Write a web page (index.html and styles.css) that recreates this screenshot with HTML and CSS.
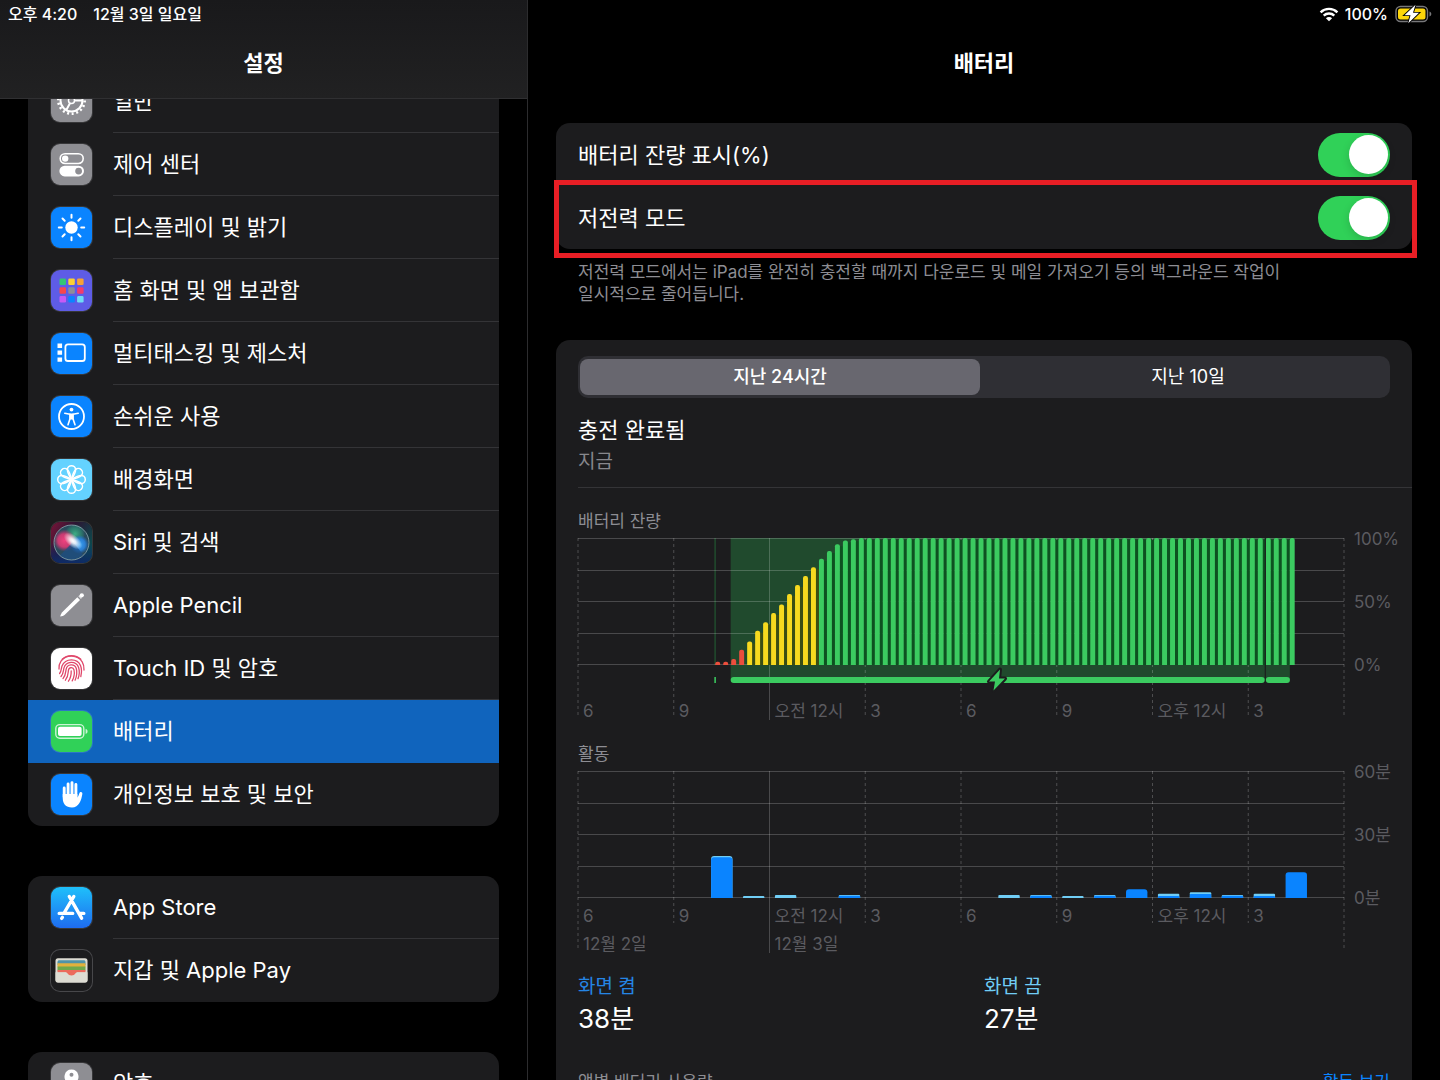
FILE: index.html
```html
<!DOCTYPE html>
<html lang="ko">
<head>
<meta charset="utf-8">
<meta name="viewport" content="width=device-width, initial-scale=1">
<title>설정 – 배터리</title>
<link rel="stylesheet" href="styles.css">
</head>
<body>
<div class="app">
  <aside class="sidebar">
    <header class="bar bar-sidebar">
      <div class="status"><span>오후 4:20</span><span>12월 3일 일요일</span></div>
      <h1 class="bar-title">설정</h1>
    </header>
    <nav class="menu" aria-label="설정">
      <ul class="group group-scrolled">
        <li><a class="item" href="#general">
          <svg class="icon gray" viewBox="0 0 41 41"><g fill="none" stroke="#fff"><circle cx="20.500" cy="19.500" r="11" stroke-width="2"/><circle cx="20.500" cy="19.500" r="13.200" stroke-width="2.600" stroke-dasharray="2 2.607"/><circle cx="20.500" cy="19.500" r="3" stroke-width="1.500"/><path d="M23.500 19.500H31M19 22.200 15.300 29M19 16.800 15.300 10" stroke-width="2"/></g></svg>
          <span class="label">일반</span></a></li>
        <li><a class="item" href="#control">
          <svg class="icon gray" viewBox="0 0 41 41"><rect x="9.200" y="9.700" width="23" height="9.800" rx="4.900" fill="none" stroke="#fff" stroke-width="1.600"/><circle cx="14.200" cy="14.600" r="3.200" fill="#fff"/><rect x="8.400" y="21.800" width="24.600" height="10.600" rx="5.300" fill="#fff"/><circle cx="27.600" cy="27.100" r="3.400" fill="#8e8e93"/></svg>
          <span class="label">제어 센터</span></a></li>
        <li><a class="item" href="#display">
          <svg class="icon blue" viewBox="0 0 41 41"><circle cx="20.500" cy="20.500" r="6.200" fill="#fff"/><path d="M20.500 7.800v3M20.500 30.200v3M7.800 20.500h3M30.200 20.500h3M11.500 11.500l2.200 2.200M27.300 27.300l2.200 2.200M11.500 29.500l2.200-2.200M27.300 13.700l2.200-2.200" stroke="#fff" stroke-width="2" stroke-linecap="round"/></svg>
          <span class="label">디스플레이 및 밝기</span></a></li>
        <li><a class="item" href="#home">
          <svg class="icon purple" viewBox="0 0 41 41"><rect x="8.500" y="8.500" width="6.500" height="6.500" rx="1.300" fill="#34c575"/><rect x="17.300" y="8.500" width="6.500" height="6.500" rx="1.300" fill="#fcd033"/><rect x="26.100" y="8.500" width="6.500" height="6.500" rx="1.300" fill="#f7a135"/><rect x="8.500" y="17.300" width="6.500" height="6.500" rx="1.300" fill="#f8474c"/><rect x="17.300" y="17.300" width="6.500" height="6.500" rx="1.300" fill="#8e8e98"/><rect x="26.100" y="17.300" width="6.500" height="6.500" rx="1.300" fill="#f43b6c"/><rect x="8.500" y="26.100" width="6.500" height="6.500" rx="1.300" fill="#c65af5"/><rect x="17.300" y="26.100" width="6.500" height="6.500" rx="1.300" fill="#0a84ff"/><rect x="26.100" y="26.100" width="6.500" height="6.500" rx="1.300" fill="#6fdcf5"/></svg>
          <span class="label">홈 화면 및 앱 보관함</span></a></li>
        <li><a class="item" href="#multitasking">
          <svg class="icon blue" viewBox="0 0 41 41"><path d="M6.500 10.500h4.600v4.400H6.500zM6.500 17.400h4.600v4.400H6.500zM6.500 24.400h4.600v4.400H6.500z" fill="#fff"/><rect x="14.400" y="11.400" width="19.400" height="16.600" rx="2.600" fill="none" stroke="#fff" stroke-width="1.800"/></svg>
          <span class="label">멀티태스킹 및 제스처</span></a></li>
        <li><a class="item" href="#accessibility">
          <svg class="icon blue" viewBox="0 0 41 41"><circle cx="20.500" cy="20.500" r="12.500" fill="none" stroke="#fff" stroke-width="1.800"/><circle cx="20.500" cy="13.600" r="1.900" fill="#fff"/><path d="M13.800 17.200l5.200 1v4.500l-2 6M27.200 17.200l-5.200 1v4.500l2 6" fill="none" stroke="#fff" stroke-width="1.600" stroke-linecap="round" stroke-linejoin="round"/><path d="M18.400 17.500h4.200v6h-4.200z" fill="#fff"/></svg>
          <span class="label">손쉬운 사용</span></a></li>
        <li><a class="item" href="#wallpaper">
          <svg class="icon sky" viewBox="0 0 41 41"><g fill="none" stroke="#fff" stroke-width="1.500"><path id="petal" d="M20.500 20.500C18 16.500 16.400 13.500 16.400 10.800a4.100 4.100 0 0 1 8.200 0C24.600 13.500 23 16.500 20.500 20.500z"/><use href="#petal" transform="rotate(45 20.500 20.500)"/><use href="#petal" transform="rotate(90 20.500 20.500)"/><use href="#petal" transform="rotate(135 20.500 20.500)"/><use href="#petal" transform="rotate(180 20.500 20.500)"/><use href="#petal" transform="rotate(225 20.500 20.500)"/><use href="#petal" transform="rotate(270 20.500 20.500)"/><use href="#petal" transform="rotate(315 20.500 20.500)"/></g></svg>
          <span class="label">배경화면</span></a></li>
        <li><a class="item" href="#siri">
          <svg class="icon siri" viewBox="0 0 41 41"><defs>
            <linearGradient id="sbg" x1="0" y1="0" x2="1" y2=".6"><stop offset="0" stop-color="#7b1438"/><stop offset=".45" stop-color="#2c1533"/><stop offset="1" stop-color="#0a4d4e"/></linearGradient>
            <linearGradient id="sbl" x1="0" y1="0" x2="0" y2="1"><stop offset=".5" stop-color="#0f2b6d" stop-opacity="0"/><stop offset="1" stop-color="#0e2a66"/></linearGradient>
            <radialGradient id="sp"><stop offset="0" stop-color="#f0417e"/><stop offset=".6" stop-color="#d93a74" stop-opacity=".9"/><stop offset="1" stop-color="#c0316e" stop-opacity="0"/></radialGradient>
            <radialGradient id="sg"><stop offset="0" stop-color="#3fae86"/><stop offset=".6" stop-color="#2f8f74" stop-opacity=".7"/><stop offset="1" stop-color="#2aa27a" stop-opacity="0"/></radialGradient>
            <radialGradient id="sb"><stop offset="0" stop-color="#3ba6f7"/><stop offset=".6" stop-color="#2b83dd" stop-opacity=".9"/><stop offset="1" stop-color="#1d6fd0" stop-opacity="0"/></radialGradient>
            <radialGradient id="sw"><stop offset="0" stop-color="#fff"/><stop offset=".3" stop-color="#fff" stop-opacity=".85"/><stop offset="1" stop-color="#fff" stop-opacity="0"/></radialGradient></defs>
            <rect width="41" height="41" fill="url(#sbg)"/><rect width="41" height="41" fill="url(#sbl)"/>
            <circle cx="20.500" cy="20.500" r="17.500" fill="#2a4a5c"/><circle cx="24" cy="12" r="10" fill="url(#sg)"/><circle cx="13.500" cy="18.500" r="11" fill="url(#sp)"/><circle cx="28.500" cy="22.500" r="9.500" fill="url(#sb)"/><path d="M22 20 9 33.500c6 5.500 17 5.500 23-1z" fill="#1d4f86" opacity=".7"/><ellipse cx="22" cy="19" rx="11" ry="6" transform="rotate(40 22 19)" fill="url(#sw)"/><circle cx="20.500" cy="20.500" r="17.500" fill="none" stroke="#8fa9b2" stroke-opacity=".8"/></svg>
          <span class="label">Siri 및 검색</span></a></li>
        <li><a class="item" href="#pencil">
          <svg class="icon gray" viewBox="0 0 41 41"><path d="M9.200 31.500c.4-1.700 1-3.200 2-4.300L26.300 12.200l2.700 2.700L13.800 29.800c-1.200 1-2.700 1.500-4.600 1.700z" fill="#fff"/><path d="M27.300 11.300l1.100-1 2.600 2.500-1.100 1.100z" fill="#fff" opacity=".75"/><circle cx="30.800" cy="10.300" r="2.100" fill="#fff"/></svg>
          <span class="label">Apple Pencil</span></a></li>
        <li><a class="item" href="#touchid">
          <svg class="icon white" viewBox="0 0 41 41"><g fill="none" stroke="#e0486b" stroke-width="1.300" stroke-linecap="round"><path d="M11.200 11.200C16 6.300 25 6.300 29.800 11.200"/><path d="M8 21c-.2-3 .5-5.600 2-7.800 5-7 16.600-6.600 21.200.6 1.400 2.300 2 5 1.800 8.200"/><path d="M8.600 25.500c2-2.600 1.500-5 2.400-7.500 3.500-8.300 15.500-8 18.600-.2 1.200 3.200 1 7.200.2 10.700"/><path d="M10 28.500c2.600-3 2.300-6 2.900-8.400 2-7.400 12.300-7.600 14.700-.6 1.100 3.400.6 8-.6 11.200"/><path d="M12 30.600c2.800-3.200 2.600-6.700 3.100-9.300 1-5.700 8.600-6 10.200-.8.900 3.500.3 8.200-1.200 11.700"/><path d="M14.400 32.200c2.900-3.500 2.700-6.900 3-9.700.4-3.600 4.700-4 5.600-.6.800 3.700 0 7.700-1.800 11"/><path d="M17.400 33.200c2.400-3.300 2.900-6.400 2.800-10.300"/></g></svg>
          <span class="label">Touch ID 및 암호</span></a></li>
        <li><a class="item selected" href="#battery" aria-current="page">
          <svg class="icon green" viewBox="0 0 41 41"><rect x="4.800" y="13.600" width="28" height="13.600" rx="4" fill="none" stroke="#fff" stroke-opacity=".75" stroke-width="1.400"/><rect x="7" y="15.800" width="23.600" height="9.200" rx="2" fill="#fff"/><path d="M34.600 17.800c2.600.8 2.600 4.400 0 5.200z" fill="#fff" opacity=".75"/></svg>
          <span class="label">배터리</span></a></li>
        <li><a class="item" href="#privacy">
          <svg class="icon blue" viewBox="0 0 41 41"><path d="M13.200 14v9M17.100 10v12M21 8.600v13M24.900 10.500v12" stroke="#fff" stroke-width="2.900" stroke-linecap="round"/><path d="M11.750 20h14.600v3.600c.8-.9 1.500-2.400 2-4.300.6-2 3.400-1.600 3 .7-1 6-3.300 13.500-10.400 13.500-6.200 0-9.200-4-9.200-9z" fill="#fff"/></svg>
          <span class="label">개인정보 보호 및 보안</span></a></li>
      </ul>
      <ul class="group">
        <li><a class="item" href="#appstore">
          <svg class="icon store" viewBox="0 0 41 41"><g stroke="#fff" stroke-width="3.400" stroke-linecap="round"><path d="M22.800 9.500 13.400 25.500M18.300 9.500 30.600 31.200M8.200 26.400h13.500M28.500 26.400h4.300M11.400 30.400l-.7 1"/></g></svg>
          <span class="label">App Store</span></a></li>
        <li><a class="item" href="#wallet">
          <svg class="icon wallet" viewBox="0 0 41 41"><rect x="4.500" y="8.200" width="32" height="24.300" rx="2.500" fill="#dddcd3"/><path d="M6.500 12.300c0-1.500.7-2 2-2h24c1.300 0 2 .5 2 2v3h-28z" fill="#4f93a8"/><path d="M6.500 13.300h28v4h-28z" fill="#e2b13c"/><path d="M6.500 16.600h28v4h-28z" fill="#70a84b"/><path d="M6.500 20h28v2.500h-28z" fill="#ec6a5c"/><path d="M4.500 22.200h10.300c1.500 0 1.800 3.600 5.700 3.600s4.200-3.600 5.700-3.600h10.300v8a2.300 2.300 0 0 1-2.300 2.300H6.800a2.300 2.300 0 0 1-2.300-2.300z" fill="#dddcd3"/><path d="M14.500 21.500h12c-1.500 0-2.100 4-6 4s-4.500-4-6-4z" fill="#ec6a5c"/></svg>
          <span class="label">지갑 및 Apple Pay</span></a></li>
      </ul>
      <ul class="group">
        <li><a class="item" href="#passwords">
          <svg class="icon gray" viewBox="0 0 41 41"><path fill-rule="evenodd" d="M20.500 6.500a7 7 0 0 1 3 13.300V32l-3 3-3-3V19.800a7 7 0 0 1 3-13.300zm0 3.200a2 2 0 1 0 0 4 2 2 0 0 0 0-4z" fill="#fff"/></svg>
          <span class="label">암호</span></a></li>
      </ul>
    </nav>
  </aside>

  <main class="detail">
    <header class="bar">
      <div class="status status-right">
        <svg class="wifi" viewBox="0 0 20 15" aria-hidden="true"><path d="M1.600 5.300a12 12 0 0 1 16.800 0M4.700 8.600a7.600 7.600 0 0 1 10.600 0" fill="none" stroke="#fff" stroke-width="2.400"/><path d="M10 14.300 6.900 11.200a4.400 4.400 0 0 1 6.200 0z" fill="#fff"/></svg>
        <span>100%</span>
        <svg class="battery" viewBox="0 0 38 20" aria-hidden="true"><rect x="2" y="2.500" width="31.500" height="15" rx="4.500" fill="none" stroke="#77777a" stroke-width="1.400"/><rect x="4" y="4.500" width="27.500" height="11" rx="2.500" fill="#fdd60a"/><path d="M35.500 7.500c2.400.8 2.400 4.200 0 5z" fill="#77777a"/><path d="M21.500.8 10.500 11.200h6L14.300 19.200 25 8.800h-6z" fill="#fff" stroke="#000" stroke-width="1.800" paint-order="stroke"/></svg>
      </div>
      <h2 class="bar-title">배터리</h2>
    </header>

    <div class="content">
      <section class="card">
        <label class="option"><span>배터리 잔량 표시(%)</span><input class="switch" type="checkbox" role="switch" checked></label>
        <label class="option highlighted"><span>저전력 모드</span><input class="switch" type="checkbox" role="switch" checked></label>
      </section>
      <p class="note">저전력 모드에서는 iPad를 완전히 충전할 때까지 다운로드 및 메일 가져오기 등의 백그라운드 작업이 일시적으로 줄어듭니다.</p>

      <section class="card usage">
        <div class="segments">
          <button class="segment active" type="button" aria-pressed="true">지난 24시간</button>
          <button class="segment" type="button" aria-pressed="false">지난 10일</button>
        </div>
        <div class="charge">
          <p class="charge-state">충전 완료됨</p>
          <p class="charge-time">지금</p>
        </div>

        <h3 class="chart-title">배터리 잔량</h3>
        <div class="chart">
          <div class="plot">
            <svg class="canvas" id="level" role="img" aria-label="배터리 잔량"></svg>
            <div class="hours"><span>6</span><span>9</span><span>오전 12시</span><span>3</span><span>6</span><span>9</span><span>오후 12시</span><span>3</span></div>
          </div>
          <div class="scale"><span>100%</span><span>50%</span><span>0%</span></div>
        </div>

        <h3 class="chart-title">활동</h3>
        <div class="chart">
          <div class="plot">
            <svg class="canvas" id="activity" role="img" aria-label="활동"></svg>
            <div class="hours hours-dated"><span>6<br>12월 2일</span><span>9</span><span>오전 12시<br>12월 3일</span><span>3</span><span>6</span><span>9</span><span>오후 12시</span><span>3</span></div>
          </div>
          <div class="scale"><span>60분</span><span>30분</span><span>0분</span></div>
        </div>

        <dl class="totals">
          <div><dt class="on">화면 켬</dt><dd>38분</dd></div>
          <div><dt class="off">화면 끔</dt><dd>27분</dd></div>
        </dl>
        <div class="apps"><span>앱별 배터리 사용량</span><a href="#activity">활동 보기</a></div>
      </section>
    </div>
  </main>
</div>
<script src="charts.js"></script>
</body>
</html>
```
FILE: styles.css
```css
* { box-sizing: border-box; }

body {
  margin: 0;
  background: #000;
  color: #fff;
  font-family: Inter, "Noto Sans CJK KR", sans-serif;
  font-size: 22px;
  line-height: 32px;
}

h1, h2, h3, p, ul, dl, dd { margin: 0; padding: 0; }
ul { list-style: none; }
a { color: inherit; text-decoration: none; }

.app {
  display: grid;
  grid-template-columns: 11fr 19fr;
  height: 100vh;
}

.sidebar, .detail {
  display: flex;
  flex-direction: column;
  min-width: 0;
  min-height: 0;
}
.sidebar { border-right: 1px solid #2c2c2e; }

/* Top bars */
.bar { flex: none; height: 99px; }
.bar-sidebar {
  background: linear-gradient(#19191b, #212122);
  border-bottom: 1px solid #303032;
}
.status {
  display: flex;
  align-items: center;
  gap: 16px;
  height: 28px;
  padding: 0 8px;
  font-size: 16px;
  font-weight: 500;
  line-height: 28px;
}
.status-right { justify-content: flex-end; gap: 6px; }
.wifi { width: 20px; height: 15px; }
.battery { width: 38px; height: 20px; }
.bar-title {
  padding-top: 19px;
  font-size: 22px;
  font-weight: 600;
  line-height: 32px;
  text-align: center;
}

/* Sidebar menu */
.menu, .content {
  flex: 1;
  min-height: 0;
  overflow: hidden auto;
  scrollbar-width: none;
}
.menu { padding: 0 28px; }
.group {
  margin-bottom: 50px;
  border-radius: 14px;
  background: #1c1c1e;
  overflow: hidden;
}
.group-scrolled { margin-top: -29px; }
.item {
  display: flex;
  align-items: center;
  gap: 21px;
  height: 63px;
  padding-left: 23px;
}
.label {
  flex: 1;
  line-height: 62px;
  border-bottom: 1px solid #343437;
}
li:last-child .label, .selected .label { border-color: transparent; }
.selected { background: #1064bd; }

.icon {
  flex: none;
  width: 41px;
  height: 41px;
  border-radius: 9px;
  box-shadow: 0 0 0 1px rgba(255, 255, 255, .12);
}
.gray { background: #8e8e93; }
.blue { background: #0a84ff; }
.purple { background: #5e5ce6; }
.sky { background: #64d2ff; }
.white { background: #fff; }
.green { background: #30d158; }
.store { background: linear-gradient(#1fc0fa, #1e6cf0); }
.wallet { background: #1c1c1e; box-shadow: 0 0 0 1px #47474a; }

/* Detail pane */
.content { padding: 24px 28px 0; }
.card {
  border-radius: 14px;
  background: #1c1c1e;
}
.option {
  position: relative;
  display: flex;
  align-items: center;
  justify-content: space-between;
  height: 63px;
  padding: 0 22px;
}
.highlighted::after {
  content: "";
  position: absolute;
  inset: -6px -5px -9px -2px;
  border: 5px solid #e81e25;
  pointer-events: none;
}
.switch {
  appearance: none;
  display: flex;
  justify-content: flex-end;
  align-items: center;
  width: 72px;
  height: 44px;
  margin: 0;
  padding: 0 2px;
  border-radius: 22px;
  background: #30d158;
}
.switch::before {
  content: "";
  width: 39px;
  height: 39px;
  border-radius: 50%;
  background: #fff;
  box-shadow: 0 3px 8px rgba(0, 0, 0, .15);
}
.switch:not(:checked) { justify-content: flex-start; background: #39393d; }

.note {
  max-width: 780px;
  margin: 12px 22px 35px;
  color: #8d8d93;
  font-size: 17px;
  line-height: 22px;
  word-break: keep-all;
}

.usage { padding: 16px 22px 40px; }
.segments {
  display: grid;
  grid-template-columns: 1fr 1fr;
  gap: 8px;
  height: 42px;
  padding: 3px 2px;
  border-radius: 10px;
  background: #2f2f34;
}
.segment {
  border: 0;
  border-radius: 8px;
  background: none;
  color: #fff;
  font: 400 18px/36px Inter, "Noto Sans CJK KR", sans-serif;
  padding: 0;
}
.active { background: #68676f; font-weight: 500; }

.charge {
  margin: 16px -22px 21px 0;
  padding-bottom: 9px;
  border-bottom: 1px solid #343437;
}
.charge-state { font-size: 22px; }
.charge-time { font-size: 19px; color: #87878c; }

/* Charts */
.chart-title {
  margin: 20px 0 5px;
  color: #8d8d93;
  font-size: 17px;
  font-weight: 400;
  line-height: 24px;
}
.chart {
  display: grid;
  grid-template-columns: 1fr 68px;
  margin-right: -22px;
  color: #5b5b60;
  font-size: 17px;
  line-height: 28px;
}
.plot { display: grid; min-width: 0; }
.canvas, .hours { grid-area: 1 / 1; }
.canvas { width: 100%; height: 184px; overflow: visible; }
.hours {
  display: grid;
  grid-template-columns: repeat(8, 1fr);
  height: 184px;
  padding-top: 159px;
  white-space: nowrap;
}
.hours-dated { padding-top: 131px; }
.hours span { padding-left: 5px; }
.scale {
  display: flex;
  flex-direction: column;
  justify-content: space-between;
  height: 154px;
  margin-top: -13px;
  padding-left: 10px;
}

.grid-line { stroke: #fff; stroke-opacity: .2; }
.grid-dash { stroke: #fff; stroke-opacity: .22; stroke-dasharray: 3 3; }
.charging { fill: #30d158; fill-opacity: .26; }
.charging-line { fill: #3bcb60; }
.charging-gap { fill: #1c1c1e; }
.bolt { fill: #3bcb60; stroke: #1c1c1e; stroke-width: 4px; stroke-linejoin: round; paint-order: stroke; }
.low { fill: #eb4e3d; }
.mid { fill: #f7d91f; }
.high { fill: #3bcb60; }
.mid-gap { fill: #3b4d13; }
.high-gap { fill: #0d5120; }
.screen-on { fill: #0a84ff; }
.screen-off { fill: #70cdf5; }

.totals {
  display: grid;
  grid-template-columns: 1fr 1fr;
  margin-top: 18px;
}
.totals dt { font-size: 19px; line-height: 28px; }
.totals dd { font-size: 26px; line-height: 36px; }
.on { color: #2585e5; }
.off { color: #70cdf5; }
.apps {
  display: flex;
  justify-content: space-between;
  margin-top: 33px;
  color: #8d8d93;
  font-size: 17px;
  line-height: 24px;
}
.apps a { color: #0a84ff; }
```
FILE: charts.js
```js
const NS = 'http://www.w3.org/2000/svg';
const PLOT = 127;

function add(parent, tag, attrs) {
  const el = document.createElementNS(NS, tag);
  for (const key in attrs) el.setAttribute(key, attrs[key]);
  parent.appendChild(el);
  return el;
}

const pct = (value) => value + '%';

// Horizontal rules, then one vertical rule per three hours; midnight is solid.
function drawGrid(svg, endOf) {
  for (let i = 0; i <= 4; i++) {
    const y = Math.round(i * 31.5) + 0.5;
    add(svg, 'line', { class: 'grid-line', x1: 0, x2: '100%', y1: y, y2: y });
  }
  for (let i = 0; i <= 8; i++) {
    const x = pct(i * 12.5);
    add(svg, 'line', { class: i === 2 ? 'grid-line' : 'grid-dash', x1: x, x2: x, y1: 0, y2: endOf(i) });
  }
}

// Battery level, one bar per 15 minutes, from slot 17 of 96.
const FIRST = 17;
const levels = [2.6, 2.6, 4.8, 12, 18.5, 27, 33.6, 41, 47.6, 56, 63, 70, 77, 83.6, 89.7, 95, 98, 99];
while (levels.length < 73) levels.push(100);

const level = document.getElementById('level');
const SLOT = 100 / 96;
add(level, 'rect', { class: 'charging', x: '17.8%', y: 0, width: '0.2%', height: PLOT });
add(level, 'rect', { class: 'charging', x: '19.93%', y: 0, width: '73%', height: 142 });
drawGrid(level, (i) => (i === 2 ? 182 : 180));

const bars = add(level, 'svg', { width: '100%', height: PLOT });
levels.forEach((value, i) => {
  const slot = FIRST + i;
  const kind = slot < 21 ? 'low' : slot < 30 ? 'mid' : 'high';
  const h = value / 100 * PLOT;
  if (kind !== 'low' && i < levels.length - 1) {
    add(bars, 'rect', { class: kind + '-gap', x: pct((slot + 0.8) * SLOT), y: PLOT - h + 2, width: pct(0.4 * SLOT), height: h });
  }
  add(bars, 'rect', { class: kind, x: pct((slot + 0.2) * SLOT), y: PLOT - h, width: pct(0.62 * SLOT), height: h + 4, rx: 2 });
});

add(level, 'rect', { class: 'charging-gap', x: '89.65%', y: 0, width: '0.15%', height: 142 });
add(level, 'rect', { class: 'charging-line', x: '17.8%', y: 139, width: '0.2%', height: 6 });
add(level, 'rect', { class: 'charging-line', x: '19.93%', y: 139, width: '69.72%', height: 6, rx: 3 });
add(level, 'rect', { class: 'charging-line', x: '89.8%', y: 139, width: '3.14%', height: 6, rx: 3 });
const bolt = add(level, 'svg', { x: '54.7%', y: 142, overflow: 'visible' });
add(bolt, 'path', { class: 'bolt', d: 'M3-10.500-8 1.500h6L-3.500 10.500 8-1.500H2z' });

// Activity: [hour slot, total %, screen-off share of that %].
const activity = document.getElementById('activity');
drawGrid(activity, (i) => (i === 2 ? 182 : i === 0 || i === 8 ? 180 : 152));
const hours = [
  [4, 33, 1], [5, 1.6, 1.6], [6, 2.3, 2.3], [8, 2.3, 0.5], [13, 2.3, 2.3], [14, 2.3, 0.5], [15, 1.6, 1.6],
  [16, 2.3, 0.5], [17, 6.8, 0], [18, 3.3, 1.7], [19, 4.6, 1.5], [20, 2.3, 0.5], [21, 3.3, 1.7], [22, 20.2, 0],
];
const area = add(activity, 'svg', { width: '100%', height: PLOT });
hours.forEach(([slot, total, off]) => {
  const h = total / 100 * PLOT;
  const cap = off / 100 * PLOT;
  const x = pct((slot + 0.17) * 100 / 24);
  const width = pct(0.67 * 100 / 24);
  const rx = h > 6 ? 3 : 1;
  if (off) add(area, 'rect', { class: 'screen-off', x, y: PLOT - h, width, height: h + 4, rx });
  if (off < total) add(area, 'rect', { class: 'screen-on', x, y: PLOT - h + cap, width, height: h + 4, rx });
});
```
